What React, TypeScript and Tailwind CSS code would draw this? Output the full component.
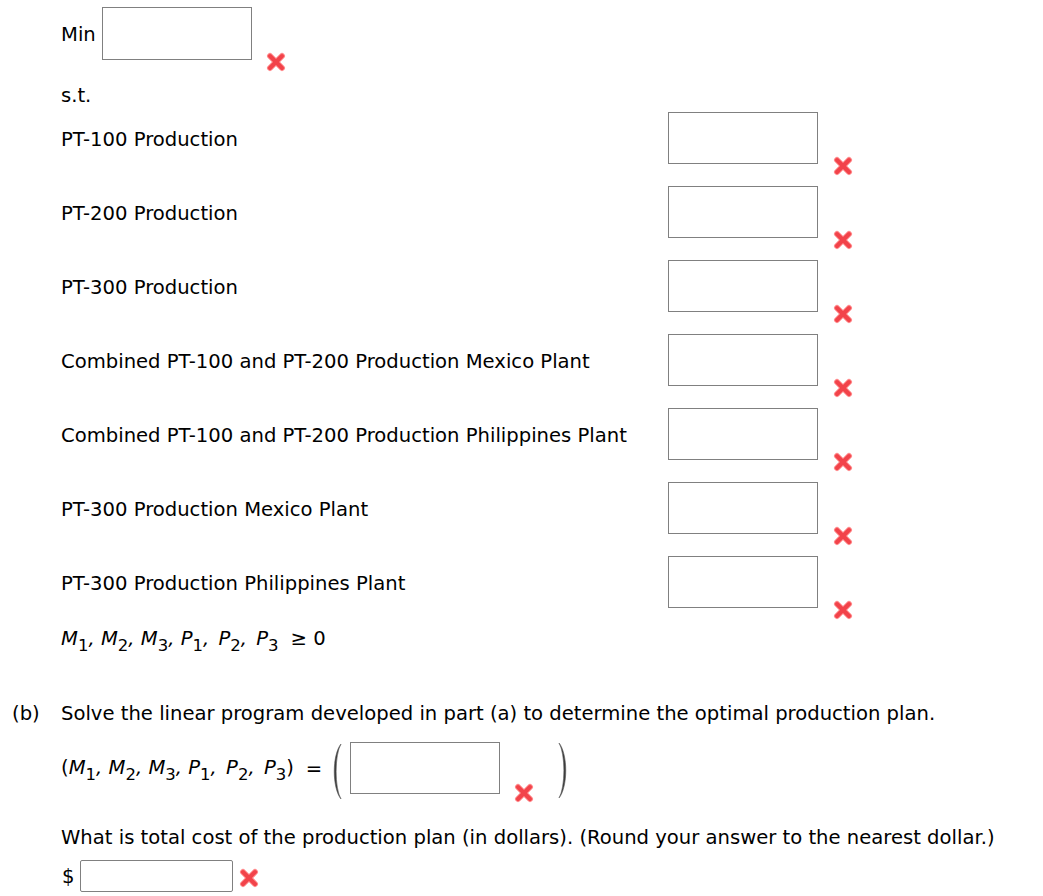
import React from "react";

function XIcon({ className = "" }: { className?: string }) {
  return (
    <svg className={className} width="20" height="20" viewBox="0 0 20 20">
      <g strokeLinecap="round">
        <line x1="4" y1="4" x2="16" y2="16" stroke="#ff8a8c" strokeWidth="6" />
        <line x1="16" y1="4" x2="4" y2="16" stroke="#ff8a8c" strokeWidth="6" />
        <line x1="4" y1="4" x2="16" y2="16" stroke="#f2434a" strokeWidth="4" />
        <line x1="16" y1="4" x2="4" y2="16" stroke="#f2434a" strokeWidth="4" />
      </g>
    </svg>
  );
}

function V({ l, n, last }: { l: string; n: string; last?: boolean }) {
  return (
    <>
      <i>{l}</i>
      <span className="relative top-[6px] text-[16.5px]">{n}</span>
      {last ? "" : <i className={l === "P" ? "mr-[3px]" : ""}>,</i>}
      {last ? "" : " "}
    </>
  );
}

function Paren({ right }: { right?: boolean }) {
  return (
    <svg width="13" height="57" viewBox="0 0 13 57" className={right ? "-scale-x-100" : ""}>
      <path d="M12 1 C 3 12, 3 45, 12 56 C 5.5 45, 5.5 12, 12 1 Z" fill="#3a3a3a" stroke="#555" strokeWidth="0.6" />
    </svg>
  );
}

const rows = [
  "PT-100 Production",
  "PT-200 Production",
  "PT-300 Production",
  "Combined PT-100 and PT-200 Production Mexico Plant",
  "Combined PT-100 and PT-200 Production Philippines Plant",
  "PT-300 Production Mexico Plant",
  "PT-300 Production Philippines Plant",
];

export default function App() {
  return (
    <div className="w-[1043px] h-[896px] overflow-hidden bg-white text-black font-['DejaVu_Sans',sans-serif] text-[19.6px] leading-[24px]">
      <div className="pt-[7px] pl-[61px]">
        <div className="flex h-[53px] items-center">
          <span className="mt-[3px]">Min</span>
          <div className="ml-[6px] w-[150px] h-[53px] border border-[#808080] self-start" />
          <XIcon className="self-start mt-[45px] ml-[14px]" />
        </div>
        <div className="mt-[24px] h-[24px]">s.t.</div>
        <div className="mt-[4px] flex flex-col gap-[22px]">
          {rows.map((r) => (
            <div key={r} className="flex h-[52px] items-start">
              <div className="w-[607px] h-[52px] pt-[3px] flex items-center">{r}</div>
              <div className="w-[150px] h-[52px] border border-[#808080]" />
              <XIcon className="mt-[44px] ml-[15px]" />
            </div>
          ))}
        </div>
        <div className="mt-[19px] h-[24px]">
          <V l="M" n="1" />
          <V l="M" n="2" />
          <V l="M" n="3" />
          <V l="P" n="1" />
          <V l="P" n="2" />
          <V l="P" n="3" last />
          <span className="ml-[12px]">≥ 0</span>
        </div>
      </div>
      <div className="mt-[51px] flex h-[24px]">
        <span className="w-[61px] pl-[12px]">(b)</span>
        <span>Solve the linear program developed in part (a) to determine the optimal production plan.</span>
      </div>
      <div className="pl-[61px]">
        <div className="mt-[16px] flex h-[52px] items-center">
          <span className="mt-[1px]">
            (<V l="M" n="1" />
            <V l="M" n="2" />
            <V l="M" n="3" />
            <V l="P" n="1" />
            <V l="P" n="2" />
            <V l="P" n="3" last />)
          </span>
          <span className="ml-[12px] mt-[1px]">=</span>
          <div className="ml-[7px] mt-[6px]">
            <Paren />
          </div>
          <div className="ml-[8px] w-[150px] h-[52px] border border-[#808080]" />
          <XIcon className="self-start mt-[41px] ml-[14px]" />
          <div className="ml-[24px] mt-[4px]">
            <Paren right />
          </div>
        </div>
        <div className="mt-[32px] h-[24px]">
          What is total cost of the production plan (in dollars). (Round your answer to the nearest dollar.)
        </div>
        <div className="mt-[10px] flex h-[32px] items-center">
          <span className="ml-[1px] mt-[2px]">$</span>
          <div className="ml-[6px] w-[153px] h-[32px] border border-[#808080] rounded-[2px]" />
          <XIcon className="ml-[6px] mt-[3px]" />
        </div>
      </div>
    </div>
  );
}
